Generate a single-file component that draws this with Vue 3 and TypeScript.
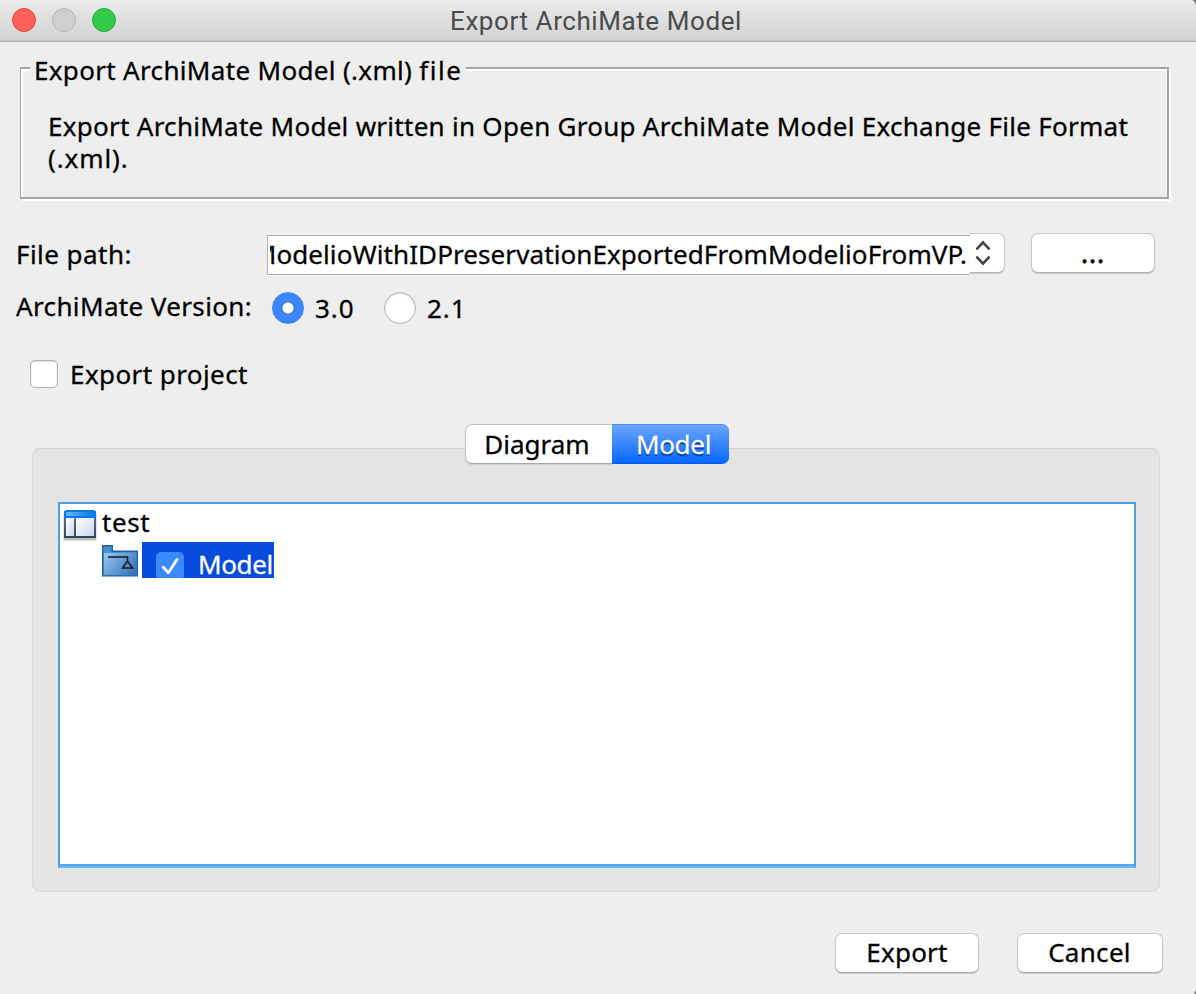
<script setup lang="ts">
import { ref } from 'vue'

const version = ref<string>('3.0')
const versions: string[] = ['3.0', '2.1']
const exportProject = ref<boolean>(false)
const activeTab = ref<string>('Model')
</script>

<template>
  <div class="window">
    <header class="titlebar">
      <div class="lights">
        <i class="light close"></i>
        <i class="light minimise"></i>
        <i class="light zoom"></i>
      </div>
      <span class="title">Export ArchiMate Model</span>
      <svg class="corner" width="4" height="6" viewBox="0 0 4 6"><path d="M0 0H4V6C3.500 3 2.500 1 0 0Z" fill="#777" /></svg>
    </header>

    <section class="group">
      <div class="legend">Export ArchiMate Model (.xml) <span class="wide">file</span></div>
      <p class="description"><span class="line1">Export ArchiMate Model written in Open Group ArchiMate Model Exchange File Format</span><span class="line2">(.xml).</span></p>
    </section>

    <div class="file-row">
      <span class="file-label">File path:</span>
      <div class="combo">
        <div class="field"><span class="clip"><span class="path">ModelioWithIDPreservationExportedFromModelioFromVP.</span></span></div>
        <div class="arrows">
          <svg width="16" height="26" viewBox="0 0 16 26" fill="none" stroke="#444" stroke-width="2.600" stroke-linecap="round" stroke-linejoin="miter">
            <path d="M2.200 8.600L8 2.400L13.800 8.600M2.200 17.400L8 23.600L13.800 17.400" />
          </svg>
        </div>
      </div>
      <button class="btn browse"><span>...</span></button>
    </div>

    <div class="version-row">
      <span class="version-label">ArchiMate Version:</span>
      <label v-for="v in versions" :key="v" class="radio" @click="version = v">
        <i class="dot" :class="{ on: version === v }"></i><span>{{ v }}</span>
      </label>
    </div>

    <label class="project-row" @click="exportProject = !exportProject">
      <i class="check"></i><span class="project-text">Export project</span>
    </label>

    <section class="panel">
      <div class="tabs">
        <button class="tab first" :class="{ active: activeTab === 'Diagram' }" @click="activeTab = 'Diagram'">Diagram</button>
        <button class="tab second" :class="{ active: activeTab === 'Model' }" @click="activeTab = 'Model'">Model</button>
      </div>
      <div class="tree">
        <div class="node root">
          <svg width="36" height="34" viewBox="0 0 36 34">
            <defs>
              <linearGradient id="bar" x1="0" x2="1" y1="0" y2="0"><stop offset="0" stop-color="#62b8ff" /><stop offset="1" stop-color="#087be2" /></linearGradient>
              <linearGradient id="pane" x1="0" x2="1" y1="0" y2="1"><stop offset="0" stop-color="#fff" /><stop offset="1" stop-color="#cbd5ea" /></linearGradient>
              <linearGradient id="frame" x1="0" x2="0" y1="0" y2="1"><stop offset="0" stop-color="#66779b" /><stop offset="1" stop-color="#3b435b" /></linearGradient>
            </defs>
            <rect x="1" y="5" width="34" height="28" rx="2" fill="#000" opacity=".12" />
            <rect x="2" y="4" width="32" height="28" fill="#000" opacity=".16" />
            <rect x="2" y="3" width="32" height="27" fill="url(#frame)" />
            <rect x="4" y="10" width="8" height="18" fill="url(#pane)" />
            <rect x="14" y="10" width="18" height="18" fill="url(#pane)" />
            <path d="M4 2H32L34 4V10H2V4Z" fill="#0579f2" />
            <rect x="4" y="4" width="28" height="4" fill="url(#bar)" />
          </svg>
          <span class="test-text">test</span>
        </div>
        <div class="node child">
          <svg width="36" height="32" viewBox="0 0 36 32">
            <defs>
              <linearGradient id="folder" x1="0" x2="1" y1="0.200" y2="0.800"><stop offset="0" stop-color="#90c2ea" /><stop offset="1" stop-color="#3674b9" /></linearGradient>
            </defs>
            <path d="M.700 30.900V.700H10.300V6.300H35.300V30.900Z" fill="#4a91d1" stroke="#225fa8" stroke-width="1.400" />
            <rect x="2" y="8" width="32" height="22" fill="url(#folder)" />
            <path d="M6 12H25.500V16M25.500 16L20.500 23H30.500L25.500 16" fill="none" stroke="#17191d" stroke-width="1.500" />
          </svg>
          <div class="selected">
            <i class="tick"><svg width="28" height="28" viewBox="0 0 28 28"><path d="M7.300 15.200L12.400 20.700L21 7.500" fill="none" stroke="#fff" stroke-width="2.900" stroke-linecap="round" stroke-linejoin="round" /></svg></i>
            <span class="node-text">Model</span>
          </div>
        </div>
      </div>
    </section>

    <footer class="actions">
      <button class="btn export"><span>Export</span></button>
      <button class="btn cancel"><span>Cancel</span></button>
    </footer>
    <svg class="resize" width="2" height="5" viewBox="0 0 2 5"><path d="M2 0V5H0Z" fill="#888" /></svg>
  </div>
</template>

<style>
body { background: #ededed; overflow: hidden; }
</style>

<style scoped>
* { box-sizing: border-box; }
.window { position: relative; width: 1196px; height: 994px; overflow: hidden; background: #eee; color: #000; font: 400 26px/32px "Noto Sans", "Open Sans", sans-serif; -webkit-text-stroke: .3px currentColor; white-space: nowrap; }
button { font: inherit; color: inherit; padding: 0; margin: 0; border: 0; }
svg { display: block; flex: none; }
.titlebar { position: relative; height: 42px; display: flex; align-items: center; justify-content: center; background: linear-gradient(#ebebeb, #d2d2d2); border-bottom: 1px solid #aeaeae; box-shadow: inset 0 -1px #c1c1c1; }
.lights { position: absolute; left: 12px; top: 8px; display: flex; gap: 16px; }
.light { width: 24px; height: 24px; border-radius: 50%; border: 1px solid; }
.close { background: #ff6059; border-color: #e2463f; }
.minimise { background: #d0d0d0; border-color: #b2b2b2; }
.zoom { background: #34cb48; border-color: #25ad37; }
.title { font: 400 26px/30px Roboto, sans-serif; letter-spacing: .58px; margin-right: 4px; color: #4b4b4b; -webkit-text-stroke: 0; }
.corner { position: absolute; right: 0; top: 0; }
.resize { position: absolute; right: 0; bottom: 0; }
.group { position: relative; width: 1149px; height: 132px; margin: 25px 0 0 20px; border: 2px solid #a4a4a4; border-left-width: 1px; box-shadow: 2px 2px #fff, inset 2px 2px #fff; padding: 41px 0 0 27px; }
.legend { position: absolute; left: 9px; top: -15px; width: 436px; height: 32px; padding-left: 4px; background: #eee; letter-spacing: .33px; }
.wide { letter-spacing: 1.500px; }
.description { margin: 0; }
.description span { display: block; }
.line1 { letter-spacing: .275px; }
.line2 { letter-spacing: .9px; }
.file-row { display: flex; height: 42px; margin: 34px 0 0 16px; align-items: flex-start; }
.file-label { width: 251px; padding-top: 5px; letter-spacing: .45px; }
.combo { display: flex; width: 738px; }
.field { width: 703px; height: 40px; margin-top: 2px; background: #fff; border: 1px solid #b1b1b1; border-right: 0; padding: 2px 3px 0 2px; }
.clip { display: flex; justify-content: flex-end; overflow: hidden; height: 34px; }
.path { letter-spacing: .09px; }
.arrows { width: 35px; height: 40px; display: flex; align-items: center; justify-content: center; padding: 0 8px 1px 0; background: #fff; border: 1px solid #c7c7c7; border-left: 0; border-bottom-color: #b0b0b0; border-radius: 0 7px 7px 0; box-shadow: 0 1px 1px #ccc; }
.btn { height: 40px; background: #fff; border: 1px solid #c7c7c7; border-bottom-color: #b0b0b0; border-radius: 7px; box-shadow: 0 1px 1px #c9c9c9; }
.btn span { display: block; }
.browse { width: 124px; margin-left: 26px; letter-spacing: 1.1px; -webkit-text-stroke-width: .8px; }
.version-row { display: flex; height: 34px; margin: 16px 0 0 16px; }
.version-label { width: 256px; letter-spacing: .37px; margin-top: -1px; }
.radio { display: flex; width: 112px; padding-top: 1px; gap: 11px; }
.dot { width: 32px; height: 32px; border-radius: 50%; background: #fff; border: 1px solid #b0b0b0; box-shadow: inset 0 1px 2px #ddd; }
.radio span { letter-spacing: 1px; }
.dot.on { background: radial-gradient(circle, #fff 5.200px, #3374dc 6px, #3a87fd 8px); border-color: #3982f3; box-shadow: none; }
.project-row { display: flex; height: 32px; margin: 35px 0 0 30px; gap: 12px; }
.project-text { margin-top: -2px; letter-spacing: .42px; }
.check { width: 28px; height: 28px; background: #fff; border: 1px solid #b0b0b0; border-radius: 5px; box-shadow: inset 0 1px 2px #ddd; }
.panel { position: relative; width: 1128px; height: 444px; margin: 56px 0 0 32px; padding: 53px 0 0 25px; background: #e4e4e4; border: 1px solid #dcdcdc; border-top-color: #d3d3d3; border-radius: 8px; }
.tabs { position: absolute; left: 432px; top: -25px; display: flex; height: 40px; }
.tab { height: 40px; background: #fff; border: 1px solid #c3c3c3; }
.first { width: 147px; border-right: 0; border-bottom-color: #aaa; border-radius: 7px 0 0 7px; box-shadow: 0 1px 1px #ccc; padding-right: 4px; }
.second { width: 117px; border-radius: 0 7px 7px 0; padding-left: 6px; letter-spacing: -.3px; }
.tab.active { color: #fff; background: linear-gradient(#6ba5fb, #0667ff); border: 0; border-top: 1px solid #4b8df1; border-bottom: 1px solid #0060ec; text-shadow: 0 2px 1px #003c99; }
.tree { width: 1078px; height: 366px; background: #fff; border: 2px solid #50a0e0; border-bottom-color: #66b7fa; box-shadow: inset 0 -2px #55a5e8; padding: 4px 0 0 2px; }
.node { display: flex; }
.root { height: 34px; }
.test-text { margin: -2px 0 0 4px; letter-spacing: .6px; }
.child { margin-left: 40px; padding-top: 3px; height: 36px; }
.selected { display: flex; width: 132px; height: 36px; margin: -3px 0 0 4px; padding: 10px 0 0 14px; overflow: hidden; background: #074bdc; color: #fff; }
.tick { width: 28px; height: 28px; background: #3a89fe; border-radius: 5px; flex: none; }
.node-text { margin: -4px 0 0 14px; letter-spacing: -.35px; }
.actions { display: flex; justify-content: flex-end; gap: 38px; margin: 41px 33px 0 0; }
.export { width: 144px; letter-spacing: .2px; }
.cancel { width: 146px; letter-spacing: .3px; padding-right: 1px; }
.actions .btn { padding-bottom: 2px; }
</style>
